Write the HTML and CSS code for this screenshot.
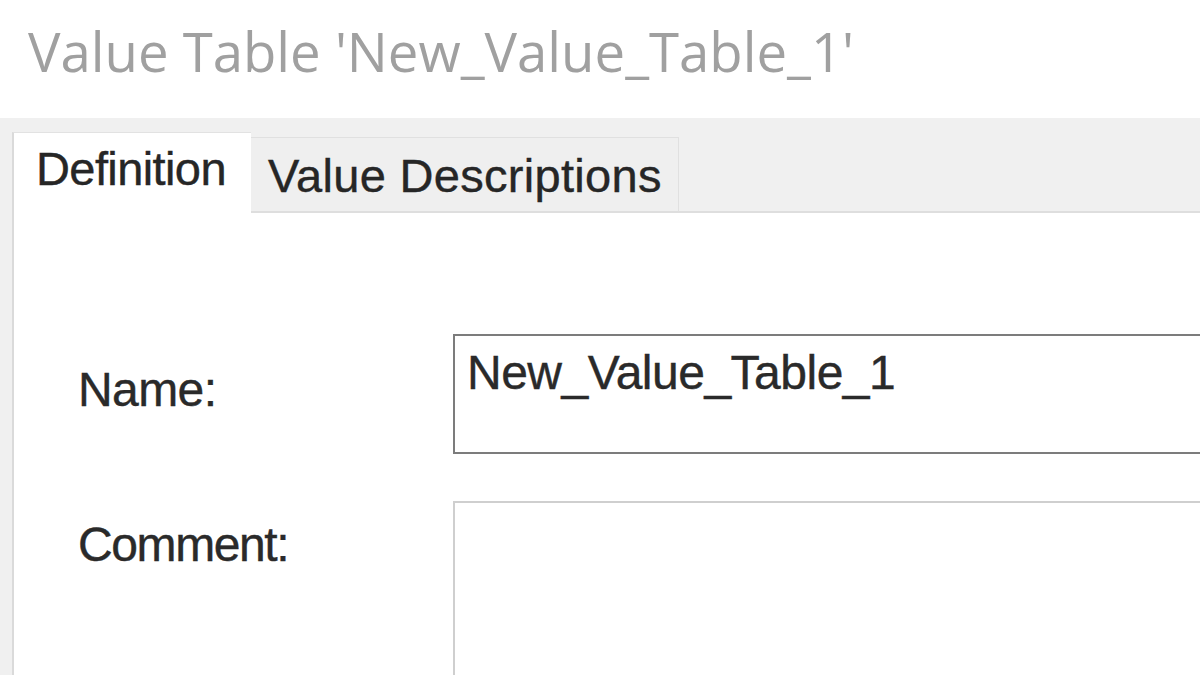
FILE: index.html
```html
<!DOCTYPE html>
<html lang="en">
<head>
<meta charset="utf-8">
<title>Value Table</title>
<link rel="stylesheet" href="styles.css">
</head>
<body>
<div class="window">
  <header class="title-bar">
    <h1 class="title">Value Table 'New_Value_Table_1'</h1>
  </header>
  <div class="body-area">
    <div class="tab-control">
      <div class="tab-strip">
        <div class="tab tab-active">Definition</div>
        <div class="tab tab-inactive">Value Descriptions</div>
        <div class="tab-filler"></div>
      </div>
      <div class="tab-panel">
        <div class="form">
          <label class="field-label label-name">Name:</label>
          <div class="textbox textbox-focus">New_Value_Table_1</div>
          <label class="field-label label-comment">Comment:</label>
          <div class="textbox textbox-multi"></div>
        </div>
      </div>
    </div>
  </div>
</div>
</body>
</html>
```
FILE: styles.css
```css
html, body {
  margin: 0;
  padding: 0;
  background: #ffffff;
  overflow: hidden;
  width: 1200px;
  height: 675px;
}

.window {
  display: flex;
  flex-direction: column;
  width: 1200px;
  height: 675px;
}

.title-bar {
  height: 118px;
  box-sizing: border-box;
  padding: 23px 0 0 28px;
  background: #ffffff;
}

.title {
  margin: 0;
  font-family: "Open Sans", "Noto Sans", sans-serif;
  font-weight: 400;
  font-size: 54.5px;
  line-height: 56px;
  color: #a0a0a0;
  white-space: nowrap;
}

.body-area {
  flex: 1;
  background: #f0f0f0;
  padding-left: 12px;
  display: flex;
  min-height: 0;
}

.tab-control {
  flex: 1;
  display: flex;
  flex-direction: column;
  min-width: 0;
}

.tab-strip {
  display: flex;
  align-items: flex-end;
  padding-top: 14px;
  height: 95px;
  box-sizing: border-box;
}

.tab {
  font-family: "Liberation Sans", Arial, sans-serif;
  font-size: 47px;
  line-height: 46px;
  color: #262626;
  white-space: nowrap;
  box-sizing: border-box;
  -webkit-text-stroke: 0.4px #262626;
}

.tab-active {
  background: #ffffff;
  border-left: 2px solid #dadada;
  border-top: 1px solid #e2e2e2;
  padding: 13px 25px 21px 22px;
  letter-spacing: -0.6px;
  height: 81px;
}

.tab-inactive {
  background: #efefef;
  border: 1px solid #e0e0e0;
  border-bottom: 2px solid #dedede;
  border-left: none;
  padding: 15px 16px 12px 17px;
  letter-spacing: 0.3px;
  height: 76px;
}

.tab-filler {
  flex: 1;
  border-bottom: 2px solid #dedede;
}

.tab-panel {
  flex: 1;
  background: #ffffff;
  border-left: 2px solid #dadada;
  padding: 121px 0 0 64px;
  overflow: hidden;
}

.form {
  display: grid;
  grid-template-columns: 375px 820px;
  row-gap: 47px;
  align-items: start;
}

.field-label {
  font-family: "Liberation Sans", Arial, sans-serif;
  font-size: 48px;
  line-height: 46px;
  color: #2a2a2a;
  -webkit-text-stroke: 0.4px #2a2a2a;
}

.label-name {
  margin-top: 33px;
  letter-spacing: -0.6px;
}

.label-comment {
  margin-top: 21px;
  letter-spacing: -1.4px;
}

.textbox {
  box-sizing: border-box;
  font-family: "Liberation Sans", Arial, sans-serif;
  font-size: 48px;
  line-height: 46px;
  color: #2a2a2a;
  background: #ffffff;
  white-space: nowrap;
  -webkit-text-stroke: 0.4px #2a2a2a;
}

.textbox-focus {
  height: 120px;
  border: 2px solid #7c7c7c;
  padding: 14px 0 0 12px;
  letter-spacing: -0.5px;
}

.textbox-multi {
  height: 260px;
  border: 2px solid #cfcfcf;
}
```
